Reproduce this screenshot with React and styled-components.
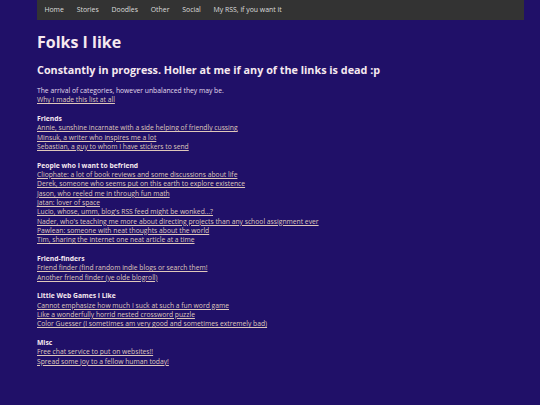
import React from 'react';
import styled, { createGlobalStyle } from 'styled-components';

const GlobalStyle = createGlobalStyle`
  html, body {
    margin: 0;
    padding: 0;
    background: #201068;
  }
  body {
    font-family: 'Open Sans', 'Noto Sans', sans-serif;
    min-height: 405px;
  }
`;

const Page = styled.div`
  width: 487px;
  margin-left: 37px;
  color: #e2dcec;
`;

const Nav = styled.nav`
  display: flex;
  align-items: center;
  height: 20px;
  background: #333333;
  padding: 0 0 0 1px;
`;

const NavLink = styled.a`
  color: #dddddd;
  font-size: 6.9px;
  text-decoration: none;
  padding: 0 6.4px;
  line-height: 20px;
`;

const H1 = styled.h1`
  font-size: 16px;
  font-weight: 700;
  color: #f6e9ef;
  margin: 12px 0 0;
  line-height: 20px;
`;

const H2 = styled.h2`
  font-size: 10.8px;
  font-weight: 700;
  color: #f6e9ef;
  margin: 10px 0 0;
  line-height: 16px;
`;

const Section = styled.div`
  display: flex;
  flex-direction: column;
  align-items: flex-start;
  font-size: 6.75px;
  line-height: 9.33px;
  margin-top: ${p => p.first ? '8px' : '9.33px'};
`;

const Title = styled.div`
  font-weight: 700;
  color: #f6e9ef;
`;

const Link = styled.a`
  color: #dfc7ba;
  text-decoration: underline;
`;

const sections = [
  {
    title: 'Friends',
    links: [
      'Annie, sunshine incarnate with a side helping of friendly cussing',
      'Minsuk, a writer who inspires me a lot',
      'Sebastian, a guy to whom I have stickers to send',
    ],
  },
  {
    title: 'People who I want to befriend',
    links: [
      'Cliophate: a lot of book reviews and some discussions about life',
      'Derek, someone who seems put on this earth to explore existence',
      'Jason, who reeled me in through fun math',
      'Jatan: lover of space',
      "Lucio, whose, umm, blog's RSS feed might be wonked...?",
      "Nader, who's teaching me more about directing projects than any school assignment ever",
      'Pawlean: someone with neat thoughts about the world',
      'Tim, sharing the internet one neat article at a time',
    ],
  },
  {
    title: 'Friend-finders',
    links: [
      'Friend finder (find random indie blogs or search them!',
      'Another friend finder (ye olde blogroll)',
    ],
  },
  {
    title: 'Little Web Games I Like',
    links: [
      'Cannot emphasize how much I suck at such a fun word game',
      'Like a wonderfully horrid nested crossword puzzle',
      'Color Guesser (I sometimes am very good and sometimes extremely bad)',
    ],
  },
  {
    title: 'Misc',
    links: [
      'Free chat service to put on websites!!',
      'Spread some joy to a fellow human today!',
    ],
  },
];

const navItems = ['Home', 'Stories', 'Doodles', 'Other', 'Social', 'My RSS, if you want it'];

export default function App() {
  return (
    <>
      <GlobalStyle />
      <Page>
        <Nav>
          {navItems.map(n => <NavLink key={n} href="#">{n}</NavLink>)}
        </Nav>
        <H1>Folks I like</H1>
        <H2>Constantly in progress. Holler at me if any of the links is dead :p</H2>
        <Section first>
          <span>The arrival of categories, however unbalanced they may be.</span>
          <Link href="#">Why I made this list at all</Link>
        </Section>
        {sections.map(s => (
          <Section key={s.title}>
            <Title>{s.title}</Title>
            {s.links.map(l => <Link key={l} href="#">{l}</Link>)}
          </Section>
        ))}
      </Page>
    </>
  );
}
